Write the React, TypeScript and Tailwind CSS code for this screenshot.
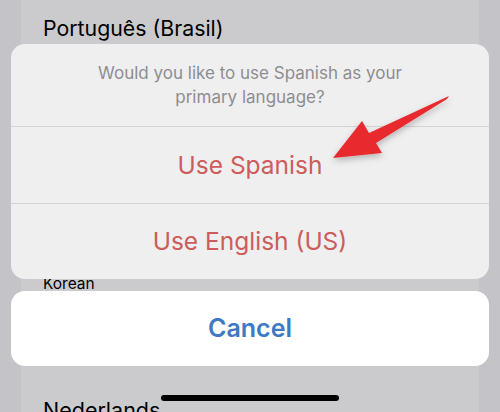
const font = { fontFamily: 'Inter, "Noto Sans", sans-serif' };

function Arrow() {
  return (
    <svg
      className="pointer-events-none absolute inset-0"
      width={500}
      height={412}
      viewBox="0 0 500 412"
    >
      <defs>
        <filter id="arrowShadow" x="-20%" y="-20%" width="140%" height="160%">
          <feDropShadow dx="0" dy="3" stdDeviation="3" floodColor="#000" floodOpacity="0.25" />
        </filter>
      </defs>
      <polygon
        points="449,96 447,99 376,143 382,153 333,158 362,121 369,133"
        fill="#e8292d"
        filter="url(#arrowShadow)"
      />
    </svg>
  );
}

export default function App() {
  return (
    <div className="relative h-[412px] w-[500px] overflow-hidden bg-[#c4c4c8]" style={font}>
      {/* dimmed language list behind the sheet */}
      <div className="mx-[21px] flex h-full flex-col bg-[#cbcbcd]">
        <div className="ml-[22px] mt-[2px] h-px bg-[#b9b9bc]" />
        <div className="ml-[22px] mt-[12px] text-[21.3px] leading-[28px] text-black">
          Português (Brasil)
        </div>
        <div className="ml-[22px] mt-[233px] text-[15.5px] leading-[18px] text-black">
          Korean
        </div>
        <div className="ml-[22px] mt-[90px] h-px bg-[#b9b9bc]" />
        <div className="ml-[22px] mt-[13px] text-[21.5px] leading-[28px] text-black">
          Nederlands
        </div>
      </div>

      {/* action sheet */}
      <div className="absolute inset-0 flex flex-col px-[11px] pt-[44px]">
        <div className="flex flex-col overflow-hidden rounded-[14px] bg-[#efeff0]">
          <div className="flex h-[82px] flex-col items-center justify-center text-center text-[17px] leading-[24px] text-[#8d8d90]">
            <span>Would you like to use Spanish as your</span>
            <span>primary language?</span>
          </div>
          <div className="h-px bg-[#d3d3d6]" />
          <button className="flex h-[76px] items-center justify-center text-[24.5px] text-[#cd5c5a]">
            Use Spanish
          </button>
          <div className="h-px bg-[#d3d3d6]" />
          <button className="flex h-[75px] items-center justify-center text-[24.5px] text-[#cd5c5a]">
            Use English (US)
          </button>
        </div>
        <button className="mt-[12px] flex h-[75px] items-center justify-center rounded-[14px] bg-white text-[25px] font-semibold text-[#3d79c5]">
          Cancel
        </button>
        <div className="mx-auto mt-[29px] h-[6px] w-[178px] rounded-full bg-black" />
      </div>

      <Arrow />
    </div>
  );
}
